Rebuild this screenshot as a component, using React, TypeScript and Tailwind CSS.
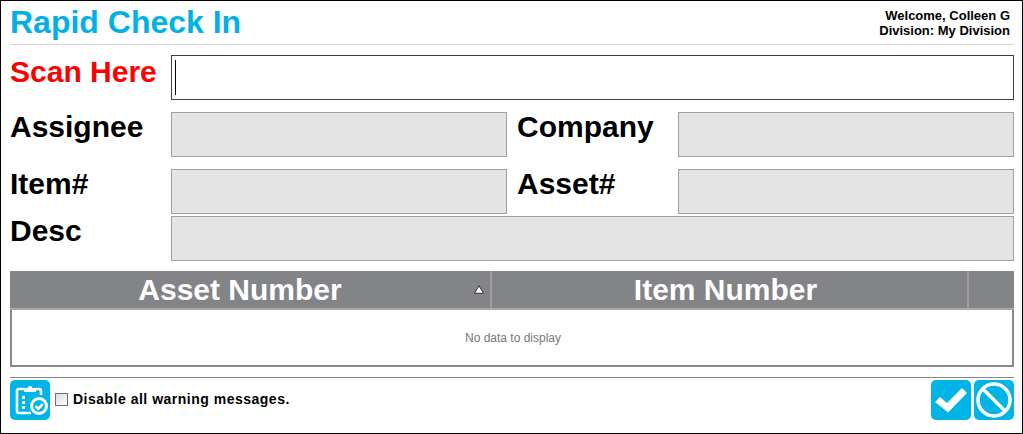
import React from "react";

const ReadOnlyBox = ({ className = "" }: { className?: string }) => (
  <div className={`h-[45px] bg-[#e4e4e4] border border-[#a0a0a0] ${className}`} />
);

const FieldLabel = ({ children, className = "" }: { children: React.ReactNode; className?: string }) => (
  <div className={`text-[30px] leading-[32px] font-bold ${className}`}>{children}</div>
);

const ChecklistIcon = () => (
  <svg viewBox="0 0 40 40" className="w-10 h-10 block">
    <rect width="40" height="40" rx="5" fill="#00b4e6" />
    <g fill="none" stroke="#fff" strokeWidth="2.6">
      <path d="M14 9H9a2 2 0 0 0-2 2v20a2 2 0 0 0 2 2h12" />
      <path d="M26 9h3a2 2 0 0 1 2 2v4" />
      <circle cx="29" cy="26" r="7.5" strokeWidth="3" />
      <path d="M25.5 26l2.8 2.8 4.5-4.8" strokeWidth="2.6" />
    </g>
    <path d="M14 12V8h3.5a2.6 2.6 0 0 1 5 0H26v4z" fill="#fff" />
    <g fill="#fff">
      <rect x="12" y="16" width="3" height="3" />
      <rect x="12" y="21" width="3" height="3" />
      <rect x="12" y="26" width="3" height="3" />
    </g>
  </svg>
);

const CheckButton = () => (
  <svg viewBox="0 0 40 40" className="w-10 h-10 block">
    <rect width="40" height="40" rx="5" fill="#00b4e6" />
    <path d="M4 22l5-5 7 6L31 8l5 5-19 19.500z" fill="#fff" />
  </svg>
);

const CancelButton = () => (
  <svg viewBox="0 0 40 40" className="w-10 h-10 block">
    <rect width="40" height="40" rx="5" fill="#00b4e6" />
    <circle cx="20" cy="20" r="16" fill="none" stroke="#fff" strokeWidth="3.5" />
    <path d="M9 9l22 22" stroke="#fff" strokeWidth="3.5" />
  </svg>
);

const SortArrow = () => (
  <svg viewBox="0 0 10 9" className="absolute right-[6px] top-[14px] w-[10px] h-[9px]">
    <path d="M5 .8L9.500 8.300H.5z" fill="#fff" stroke="#222" strokeWidth="0.9" />
  </svg>
);

export default function App() {
  return (
    <div className="w-[1023px] h-[434px] bg-white border border-black font-['Liberation_Sans',Arial,sans-serif] px-[9px] overflow-hidden">
      {/* header */}
      <div className="h-[44px] flex justify-between border-b border-[#d3d3d3]">
        <div className="text-[32px] leading-[36px] pt-[3px] font-bold text-[#00b0e6] h-[40px]">Rapid Check In</div>
        <div className="text-right text-[13px] leading-[15px] font-bold text-black pt-[7px] pr-[3px]">
          <div>Welcome, Colleen G</div>
          <div>Division: My Division</div>
        </div>
      </div>

      {/* form */}
      <div className="grid grid-cols-[161px_336px_171px_336px] mt-[10px] gap-y-[12px]">
        <FieldLabel className="text-[#ff0000] pt-[1px]">Scan Here</FieldLabel>
        <div className="col-span-3 h-[45px] border border-[#404040] flex items-center pl-[3px]">
          <div className="w-[1px] h-[35px] bg-black" />
        </div>

        <FieldLabel className="text-black -mt-[1px]">Assignee</FieldLabel>
        <ReadOnlyBox />
        <FieldLabel className="text-black pl-[10px] -mt-[1px]">Company</FieldLabel>
        <ReadOnlyBox />

        <FieldLabel className="text-black -mt-[1px]">Item#</FieldLabel>
        <ReadOnlyBox />
        <FieldLabel className="text-black pl-[10px] -mt-[1px]">Asset#</FieldLabel>
        <ReadOnlyBox />

        <FieldLabel className="text-black -mt-[11px]">Desc</FieldLabel>
        <ReadOnlyBox className="col-span-3 -mt-[10px]" />
      </div>

      {/* grid */}
      <div className="mt-[10px] w-[1004px] h-[96px] border-2 border-t-0 border-[#87888a]">
        <div className="-mx-[2px] h-[39px] bg-[#838487] flex text-white text-[30px] font-bold leading-[37px] border-b-2 border-[#a9a9a9]">
          <div className="w-[482px] pr-[20px] relative text-center border-r-2 border-[#a0a0a0]">
            Asset Number
            <SortArrow />
          </div>
          <div className="w-[477px] pr-[8px] text-center border-r-2 border-[#a0a0a0]">Item Number</div>
          <div className="flex-1" />
        </div>
        <div className="text-center text-[12px] leading-[14px] text-[#777] pt-[21px] pl-[2px]">No data to display</div>
      </div>

      {/* footer */}
      <div className="mt-[10px] border-t border-[#87888a] pt-[2px] flex items-center justify-between w-[1004px]">
        <div className="flex items-center">
          <ChecklistIcon />
          <div className="w-[13px] h-[13px] ml-[5px] border border-[#707070] bg-gradient-to-br from-[#dcdcdc] to-white -mt-[1px]" />
          <span className="ml-[5px] text-[14px] font-bold tracking-[0.5px] text-black -mt-[2px]">Disable all warning messages.</span>
        </div>
        <div className="flex gap-[3px]">
          <CheckButton />
          <CancelButton />
        </div>
      </div>
    </div>
  );
}
